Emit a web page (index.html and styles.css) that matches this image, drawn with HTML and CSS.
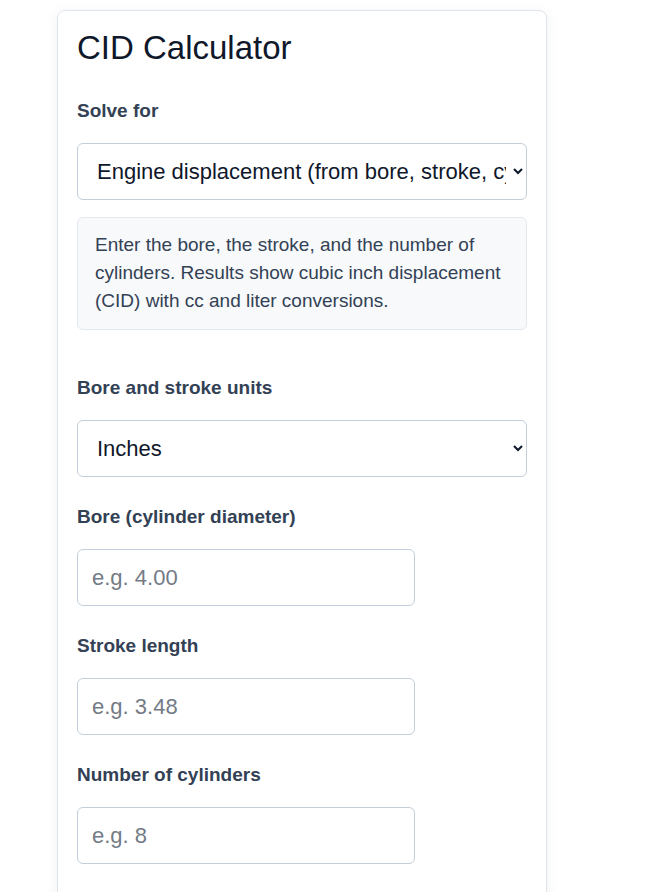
FILE: index.html
```html
<!DOCTYPE html>
<html lang="en">
<head>
    <meta charset="UTF-8">
    <meta name="viewport" content="width=device-width, initial-scale=1.0">
    <title>CID Calculator</title>
    <link rel="stylesheet" href="styles.css">
</head>
<body>
    <div class="card">
        <h1>CID Calculator</h1>

        <div class="field">
            <label for="solve-for">Solve for</label>
            <select id="solve-for" class="wide">
                <option>Engine displacement (from bore, stroke, cylinders)</option>
                <option>Bore (from displacement, stroke, cylinders)</option>
                <option>Stroke (from displacement, bore, cylinders)</option>
            </select>
        </div>

        <div class="hint">
            Enter the bore, the stroke, and the number of cylinders. Results show cubic inch displacement (CID) with cc and liter conversions.
        </div>

        <div class="field">
            <label for="units">Bore and stroke units</label>
            <select id="units" class="wide">
                <option>Inches</option>
                <option>Millimeters</option>
            </select>
        </div>

        <div class="field">
            <label for="bore">Bore (cylinder diameter)</label>
            <input type="text" id="bore" placeholder="e.g. 4.00" />
        </div>

        <div class="field">
            <label for="stroke">Stroke length</label>
            <input type="text" id="stroke" placeholder="e.g. 3.48" />
        </div>

        <div class="field">
            <label for="cylinders">Number of cylinders</label>
            <input type="text" id="cylinders" placeholder="e.g. 8" />
        </div>
    </div>
</body>
</html>
```

FILE: styles.css
```css
body {
    margin: 0;
    padding: 10px 0 0 57px;
    font-family: "Liberation Sans", Arial, sans-serif;
    background: #fff;
    color: #0f172a;
}

.card {
    width: 450px;
    padding: 19px;
    border: 1px solid #dfe5ee;
    border-radius: 8px;
    background: #fff;
    box-shadow: 0 2px 14px rgba(15, 23, 42, 0.06);
}

h1 {
    margin: 0 0 33px 0;
    font-size: 33px;
    font-weight: normal;
    line-height: 36px;
    color: #0f172a;
}

.field {
    margin-bottom: 28px;
}

label {
    display: block;
    margin-bottom: 20px;
    font-size: 19px;
    font-weight: bold;
    line-height: 24px;
    color: #334155;
}

select,
input {
    box-sizing: border-box;
    height: 57px;
    font-family: "Liberation Sans", Arial, sans-serif;
    font-size: 22px;
    color: #0f172a;
    background: #fff;
    border: 1px solid #c3cedb;
    border-radius: 6px;
}

select.wide {
    width: 450px;
    padding: 0 4px 0 15px;
}

#solve-for {
    margin-bottom: -11px;
}

input {
    width: 338px;
    padding: 0 14px;
}

input::placeholder {
    color: #737b86;
}

.hint {
    margin: 0 0 46px 0;
    padding: 13px 17px 14px 17px;
    background: #f7f9fb;
    border: 1px solid #e2e8f0;
    border-radius: 6px;
    font-size: 19px;
    line-height: 28px;
    color: #334155;
}
```
